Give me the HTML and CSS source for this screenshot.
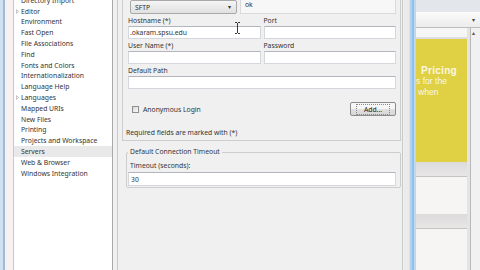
FILE: index.html
```html
<!DOCTYPE html>
<html lang="en">
<head>
    <meta charset="UTF-8">
    <meta name="viewport" content="width=device-width, initial-scale=1.0">
    <title>Preferences - Servers</title>
    <link rel="stylesheet" href="styles.css">
</head>
<body>
    <div class="frame-edge"></div>

    <ul class="tree">
        <li>Directory Import</li>
        <li><svg class="twisty" viewBox="0 0 4 6"><path d="M0.5 0.5 L3.5 3 L0.5 5.5 Z"/></svg>Editor</li>
        <li>Environment</li>
        <li>Fast Open</li>
        <li>File Associations</li>
        <li>Find</li>
        <li>Fonts and Colors</li>
        <li>Internationalization</li>
        <li>Language Help</li>
        <li><svg class="twisty" viewBox="0 0 4 6"><path d="M0.5 0.5 L3.5 3 L0.5 5.5 Z"/></svg>Languages</li>
        <li>Mapped URIs</li>
        <li>New Files</li>
        <li>Printing</li>
        <li>Projects and Workspace</li>
        <li class="selected">Servers</li>
        <li>Web &amp; Browser</li>
        <li>Windows Integration</li>
    </ul>

    <div class="main">
        <div class="page">
            <div class="group">
                <div class="proto-row">
                    <div class="combo">SFTP<span class="combo-arrow">&#9662;</span></div>
                    <div class="ok-box">ok</div>
                </div>

                <div class="field-grid">
                    <div class="field">
                        <label for="host">Hostname (*)</label>
                        <input class="input" id="host" value=".okaram.spsu.edu">
                    </div>
                    <div class="field">
                        <label for="port">Port</label>
                        <input class="input" id="port">
                    </div>
                    <div class="field">
                        <label for="user">User Name (*)</label>
                        <input class="input" id="user">
                    </div>
                    <div class="field">
                        <label for="pass">Password</label>
                        <input class="input" id="pass">
                    </div>
                    <div class="field wide">
                        <label for="path">Default Path</label>
                        <input class="input" id="path">
                    </div>
                </div>

                <div class="option-row">
                    <label class="check"><span class="check-box"></span>Anonymous Login</label>
                    <button class="btn"><span>Add...</span></button>
                </div>

                <p class="note">Required fields are marked with (*)</p>
            </div>

            <fieldset class="timeout">
                <legend>Default Connection Timeout</legend>
                <label for="timeout">Timeout (seconds):</label>
                <input class="input" id="timeout" value="30">
            </fieldset>
        </div>
    </div>

    <div class="window-edge"></div>

    <div class="backdrop">
        <div class="bk-top"></div>
        <div class="bk-bar"><span class="bk-arrow">&#9662;</span></div>
        <div class="bk-body">
            <div class="bk-col">
                <div class="bk-head"></div>
                <div class="bk-ad">
                    <div class="ad-title">Pricing</div>
                    <div class="ad-line">s for the</div>
                    <div class="ad-line indent">when</div>
                </div>
                <div class="bk-band"></div>
                <div class="bk-white"></div>
                <div class="bk-band"></div>
                <div class="bk-white rest"></div>
            </div>
            <div class="bk-scroll"><span class="bk-up">&#9652;</span></div>
        </div>
    </div>

    <!-- text cursor over the hostname box -->
    <svg class="ibeam" viewBox="0 0 5 12">
        <path d="M0 0.5h2 M3 0.5h2 M2.5 1v10 M0 11.5h2 M3 11.5h2"/>
    </svg>
</body>
</html>
```

FILE: styles.css
```css
* {
    margin: 0;
    padding: 0;
    box-sizing: border-box;
}

body {
    display: flex;
    width: 480px;
    height: 270px;
    overflow: hidden;
    position: relative;
    font-family: "Noto Sans", "DejaVu Sans", sans-serif;
    font-size: 6.8px;
    color: #333;
    background: #f0f0f0;
}

/* left window frame */
.frame-edge {
    width: 14px;
    background: linear-gradient(to right, #cfe0f2 0 3px, #a4b9ce 3px 5px, #f6f2f2 5px 13px, #c9c9c9 13px 14px);
}

.tree {
    list-style: none;
    width: 99px;
    margin-top: -5.2px;
    background: #fff;
    border-right: 1px solid #a9a9a9;
}

.tree li {
    display: flex;
    align-items: center;
    height: 10.82px;
    padding-left: 7px;
    white-space: nowrap;
}

.tree li.selected {
    background: #e9e9e9;
}

.twisty {
    width: 3px;
    height: 5px;
    margin-left: -5px;
    margin-right: 2px;
    fill: none;
    stroke: #9a9a9a;
    stroke-width: 0.8;
}

.main {
    width: 291px;
    padding: 0 1px 0 4px;
    display: flex;
}

.page {
    flex: 1;
    border-left: 1px solid #c9c9c9;
    border-right: 1px solid #c9c9c9;
}

.group {
    margin: 0 1px 0 4px;
    border: 1px solid #cdcdcd;
    border-top: none;
    padding: 0 4px 2px 5px;
}

.proto-row {
    display: flex;
    height: 14px;
}

.combo {
    display: flex;
    align-items: center;
    justify-content: space-between;
    width: 107px;
    margin-left: 2px;
    padding: 0 5px 0 4px;
    border: 1px solid #a9a9a9;
    border-radius: 2px;
    background: linear-gradient(#f5f5f5, #e0e0e0);
}

.combo-arrow {
    font-size: 6px;
    color: #333;
}

.ok-box {
    flex: 1;
    margin-left: 3px;
    padding-left: 4px;
    line-height: 10px;
    border: 1px solid #dadada;
    border-top: none;
    background: #f7f7f7;
}

.field-grid {
    display: grid;
    grid-template-columns: 1fr 1fr;
    column-gap: 3px;
    row-gap: 2px;
    margin-top: 2px;
}

.field.wide {
    grid-column: 1 / 3;
}

.field label,
.timeout label {
    display: block;
    line-height: 10px;
}

.input {
    display: block;
    width: 100%;
    height: 13px;
    padding: 0 1px;
    font: inherit;
    color: inherit;
    background: #fff;
    border: 1px solid #d4d8dd;
    border-top-color: #b2b6bc;
    outline: none;
}

.option-row {
    display: flex;
    align-items: center;
    justify-content: space-between;
    height: 14px;
    margin-top: 13px;
    padding-left: 4px;
}

.check {
    display: flex;
    align-items: center;
}

.check-box {
    width: 7px;
    height: 7px;
    margin-right: 4px;
    border: 1px solid #8f8f8f;
    background: linear-gradient(135deg, #d8d8d8, #fbfbfb);
}

.btn {
    width: 46px;
    height: 14px;
    font: inherit;
    color: #222;
    border: 1px solid #8c8c8c;
    border-radius: 2px;
    background: linear-gradient(#f6f6f6 50%, #e2e2e2 50%, #d6d6d6);
}

.btn span {
    padding: 0 7px;
    border: 1px dotted #8a8a8a;
}

.note {
    margin: 12px 0 0 -2px;
    line-height: 10px;
}

.timeout {
    margin: 6px 1px 0 8px;
    padding: 0 4px 1px 1px;
    border: 1px solid #cdcdcd;
    border-radius: 2px;
}

.timeout legend {
    padding: 0 2px;
    line-height: 10px;
}

.timeout label {
    margin: 4px 0 0 2px;
}

.timeout .input {
    height: 14px;
    margin-top: 1px;
    padding-left: 2px;
}

/* blue border of the dialog window */
.window-edge {
    width: 12px;
    background: linear-gradient(to right, #ebebeb 0 5px, #d6e3ef 5px 6px, #b4d1ec 6px 8px, #92c0e6 8px 10px, #bdd7ee 10px 12px);
}

/* application behind the dialog */
.backdrop {
    flex: 1;
    display: flex;
    flex-direction: column;
    background: #f4f2f0;
}

.bk-top {
    height: 12px;
    background: #e3e7eb;
}

.bk-bar {
    display: flex;
    align-items: center;
    justify-content: flex-end;
    height: 16px;
    padding-right: 5px;
    background: linear-gradient(#fbfbfb, #ececec);
    border-bottom: 1px solid #bdbdbd;
}

.bk-arrow {
    font-size: 6px;
    color: #444;
}

.bk-body {
    flex: 1;
    display: flex;
}

.bk-col {
    width: 51px;
    display: flex;
    flex-direction: column;
}

.bk-head {
    height: 11px;
    background: #f6f6f6;
    border-bottom: 2px solid #dedede;
}

.bk-ad {
    height: 123px;
    padding-top: 26px;
    background: #dfd044;
    color: #fcf8e0;
    font-family: "Liberation Sans", Arial, sans-serif;
    white-space: nowrap;
}

.ad-title {
    padding-left: 5px;
    font-size: 10px;
    font-weight: bold;
    line-height: 11px;
    letter-spacing: 0.3px;
}

.ad-line {
    font-size: 8.6px;
    line-height: 11px;
}

.ad-line.indent {
    padding-left: 2px;
}

.bk-band {
    height: 15px;
    background: linear-gradient(#dcdada, #e8e6e6);
    border-bottom: 1px solid #c4c4c4;
}

.bk-white {
    height: 37px;
    background: #f7f5f3;
}

.bk-white.rest {
    flex: 1;
}

.bk-scroll {
    flex: 1;
    display: flex;
    justify-content: center;
    background: linear-gradient(to right, #e4e4e4 0 3px, #b9b9b9 3px 4px, #f1f1f1 4px);
}

.bk-up {
    font-size: 6px;
    line-height: 10px;
    color: #555;
}

.ibeam {
    position: absolute;
    left: 235px;
    top: 22px;
    width: 5px;
    height: 12px;
    fill: none;
    stroke: #3a3a3a;
    stroke-width: 1;
}
```
